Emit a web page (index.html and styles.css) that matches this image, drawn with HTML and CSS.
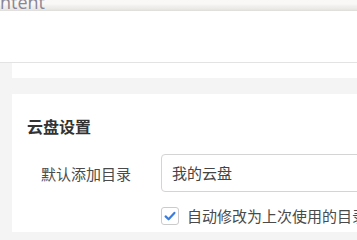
FILE: index.html
```html
<!DOCTYPE html>
<html lang="zh-CN">
<head>
<meta charset="utf-8">
<link rel="stylesheet" href="styles.css">
</head>
<body>
<div class="topbar"><span class="tab-text">ntent</span></div>
<div class="header"></div>
<div class="main">
  <div class="card card-tail"></div>
  <div class="card">
    <div class="card-title">云盘设置</div>
    <div class="row">
      <div class="label">默认添加目录</div>
      <div class="input">我的云盘</div>
    </div>
    <div class="check-row">
      <span class="checkbox">
        <svg width="18" height="18" viewBox="0 0 18 18"><path d="M4.6 9.4 L7.6 12.3 L13.4 5.9" fill="none" stroke="#3b7ddc" stroke-width="2.2" stroke-linecap="round" stroke-linejoin="round"/></svg>
      </span>
      <span class="check-text">自动修改为上次使用的目录</span>
    </div>
  </div>
</div>
</body>
</html>
```

FILE: styles.css
```css
html, body {
  margin: 0;
  padding: 0;
  width: 357px;
  height: 232px;
  overflow: hidden;
  background: #f4f4f4;
  font-family: "Noto Sans CJK SC", "Noto Sans", sans-serif;
}

.topbar {
  height: 11px;
  background: linear-gradient(#f9f8f6 0, #f9f8f6 4px, #f1f0ee 6px, #ebe9e6 9px, #dedcd9 11px);
  overflow: visible;
}

.tab-text {
  display: block;
  font-family: "Open Sans", sans-serif;
  font-size: 18px;
  line-height: 0;
  padding-top: 2px;
  color: #8a8595;
}

.header {
  height: 51px;
  background: #fff;
  border-bottom: 1px solid #e3e3e3;
}

.main {
  padding-left: 12px;
}

.card {
  background: #fff;
  padding: 20px 15px 20px 15px;
  width: 400px;
}

.card-tail {
  height: 15px;
  padding: 0;
  margin-bottom: 16px;
}

.card-title {
  font-size: 16px;
  font-weight: bold;
  line-height: 24px;
  color: #333;
}

.row {
  display: flex;
  align-items: center;
  margin-top: 16px;
  padding-left: 14px;
}

.label {
  width: 120px;
  font-size: 15px;
  color: #4a4a4a;
}

.input {
  box-sizing: border-box;
  width: 260px;
  height: 38px;
  border: 1px solid #d4d4d4;
  border-radius: 4px;
  padding-left: 10px;
  font-size: 15px;
  line-height: 36px;
  color: #444;
}

.check-row {
  display: flex;
  align-items: center;
  margin-top: 13px;
  padding-left: 134px;
}

.checkbox {
  box-sizing: border-box;
  width: 18px;
  height: 18px;
  border: 1px solid #cbcbcb;
  border-radius: 3px;
  background: #fff;
  display: flex;
  align-items: center;
  justify-content: center;
}

.checkbox svg {
  display: block;
  flex: none;
}

.check-text {
  margin-left: 8px;
  font-size: 15px;
  color: #4a4a4a;
  white-space: nowrap;
}
```
